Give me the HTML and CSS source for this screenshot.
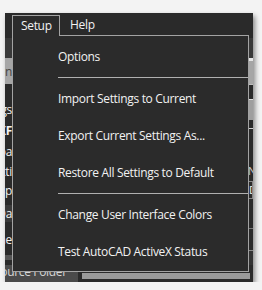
FILE: index.html
```html
<!DOCTYPE html>
<html lang="en">
<head>
  <meta charset="UTF-8" />
  <title>Setup Menu</title>
  <link rel="stylesheet" href="styles.css">
</head>
<body>
  <div class="shot">
    <!-- menu bar -->
    <div class="menubar">
      <div class="menu active">Setup</div>
      <div class="menu">Help</div>
    </div>

    <!-- window content behind the open menu -->
    <div class="pane">
      <div class="row r-gap"></div>
      <div class="row r-tool"></div>
      <div class="row r-tabs"><div class="l"><span>Gen</span></div><div class="r"></div></div>
      <div class="row r-plain"><div class="l"></div><div class="r"></div></div>
      <div class="row r-a"><div class="l"><span>Settings</span></div><div class="r"></div></div>
      <div class="row r-b"><div class="l"><span class="bold">DXF</span></div><div class="r"></div></div>
      <div class="row r-c"><div class="l"><span>Boa</span></div><div class="r"></div></div>
      <div class="row r-d"><div class="l"><span>Acti</span></div><div class="r"><span>Na</span></div></div>
      <div class="row r-e"><div class="l"><span>Sp</span></div><div class="r"><span>D</span></div></div>
      <div class="row r-f"><div class="l"><span>Da</span></div><div class="r"></div></div>
      <div class="row r-g"><div class="l"><span>Line</span></div><div class="r"></div></div>
      <div class="row r-h"><div class="l"></div><div class="r"></div></div>
      <div class="row r-btns">
        <div class="btn">Source Folder</div>
        <div class="field"></div>
      </div>
    </div>

    <!-- open dropdown -->
    <ul class="dropdown">
      <li class="item">Options</li>
      <li class="sep"></li>
      <li class="item">Import Settings to Current</li>
      <li class="item">Export Current Settings As...</li>
      <li class="item">Restore All Settings to Default</li>
      <li class="sep"></li>
      <li class="item">Change User Interface Colors</li>
      <li class="item">Test AutoCAD ActiveX Status</li>
    </ul>
  </div>
</body>
</html>
```

FILE: styles.css
```css
body {
  margin: 0;
  background: #f3f3f3;
  font-family: "Open Sans", "Noto Sans", Arial, sans-serif;
  font-size: 12px;
  letter-spacing: -0.33px;
  color: #f2f2f2;
}
.shot {
  position: relative;
  margin: 13px 0 0 5px;
  width: 248px;
  height: 269px;
  background: #2a2a2a;
  box-shadow: 2px 3px 5px rgba(0, 0, 0, 0.45);
  overflow: hidden;
}

/* menu bar */
.menubar {
  display: flex;
  align-items: flex-start;
  height: 22px;
  background: #2a2a2a;
}
.menu {
  box-sizing: border-box;
  height: 21px;
  margin-top: 2px;
  padding: 0 8px;
  line-height: 19px;
}
.menu.active {
  position: relative;
  z-index: 3;
  margin-left: 7px;
  width: 48px;
  border: 1px solid #a3a3a3;
  border-bottom: none;
  background: #2b2b2b;
}
.menu + .menu {
  padding-left: 10px;
}

/* content under the menu */
.pane {
  display: flex;
  flex-direction: column;
}
.row {
  display: flex;
  justify-content: space-between;
  align-items: center;
}
.row .l {
  width: 7px;
  display: flex;
  justify-content: flex-end;
  overflow: hidden;
  white-space: nowrap;
}
.row .r {
  width: 5px;
  align-self: stretch;
  overflow: hidden;
  white-space: nowrap;
}
.bold {
  font-weight: bold;
}
.r-gap { height: 3px; }
.r-tool { height: 20px; background: #393939; }
.r-tabs { height: 26px; background: #a6a6a6; color: #444; }
.r-tabs .r { border-top: 3px solid #e6e6e6; box-sizing: border-box; }
.r-plain { height: 15px; }
.r-plain .r { border-top: 1px solid #bdbdbd; }
.r-a { height: 21px; }
.r-a .r { background: #9f9f9f; border-top: 1px solid #dcdcdc; }
.r-b { height: 21px; }
.r-b .r { border-top: 8px solid #2a2a2a; box-sizing: border-box; }
.r-b .r::before { content: ""; display: block; height: 1px; background: #cfcfcf; }
.r-c { height: 20px; }
.r-d { height: 20px; }
.r-d .r { font-size: 11px; line-height: 20px; color: #ccc; }
.r-e { height: 18px; }
.r-e .r { border: 1px solid #888; box-sizing: border-box; font-size: 11px; line-height: 16px; }
.r-f { height: 29px; }
.r-f .l { background: #3a3a3a; }
.r-g { height: 22px; }
.r-g .r { border-top: 1px solid #777; }
.r-h { height: 15px; }
.r-h .l { height: 5px; background: #555; }
.r-h .r { background: #333; border-top: 1px solid #888; }
.r-btns {
  height: 17px;
  align-items: stretch;
  gap: 4px;
}
.btn {
  width: 73px;
  background: #4a4a4a;
  color: #d6d6d6;
  line-height: 14px;
  text-indent: -11px;
  white-space: nowrap;
  overflow: hidden;
}
.field {
  flex: 1;
  margin: 8px 3px 3px 0;
  background: #9a9a9a;
}

/* dropdown */
.dropdown {
  position: absolute;
  z-index: 2;
  top: 22px;
  left: 7px;
  box-sizing: border-box;
  width: 237px;
  height: 237px;
  margin: 0;
  padding: 2px 0 1px;
  list-style: none;
  background: #2b2b2b;
  border: 1px solid #a3a3a3;
}
.item {
  height: 37px;
  line-height: 37px;
  padding-left: 45px;
  white-space: nowrap;
}
.sep {
  height: 1px;
  margin: 2px 0 2px 45px;
  background: #b0b0b0;
}
```
